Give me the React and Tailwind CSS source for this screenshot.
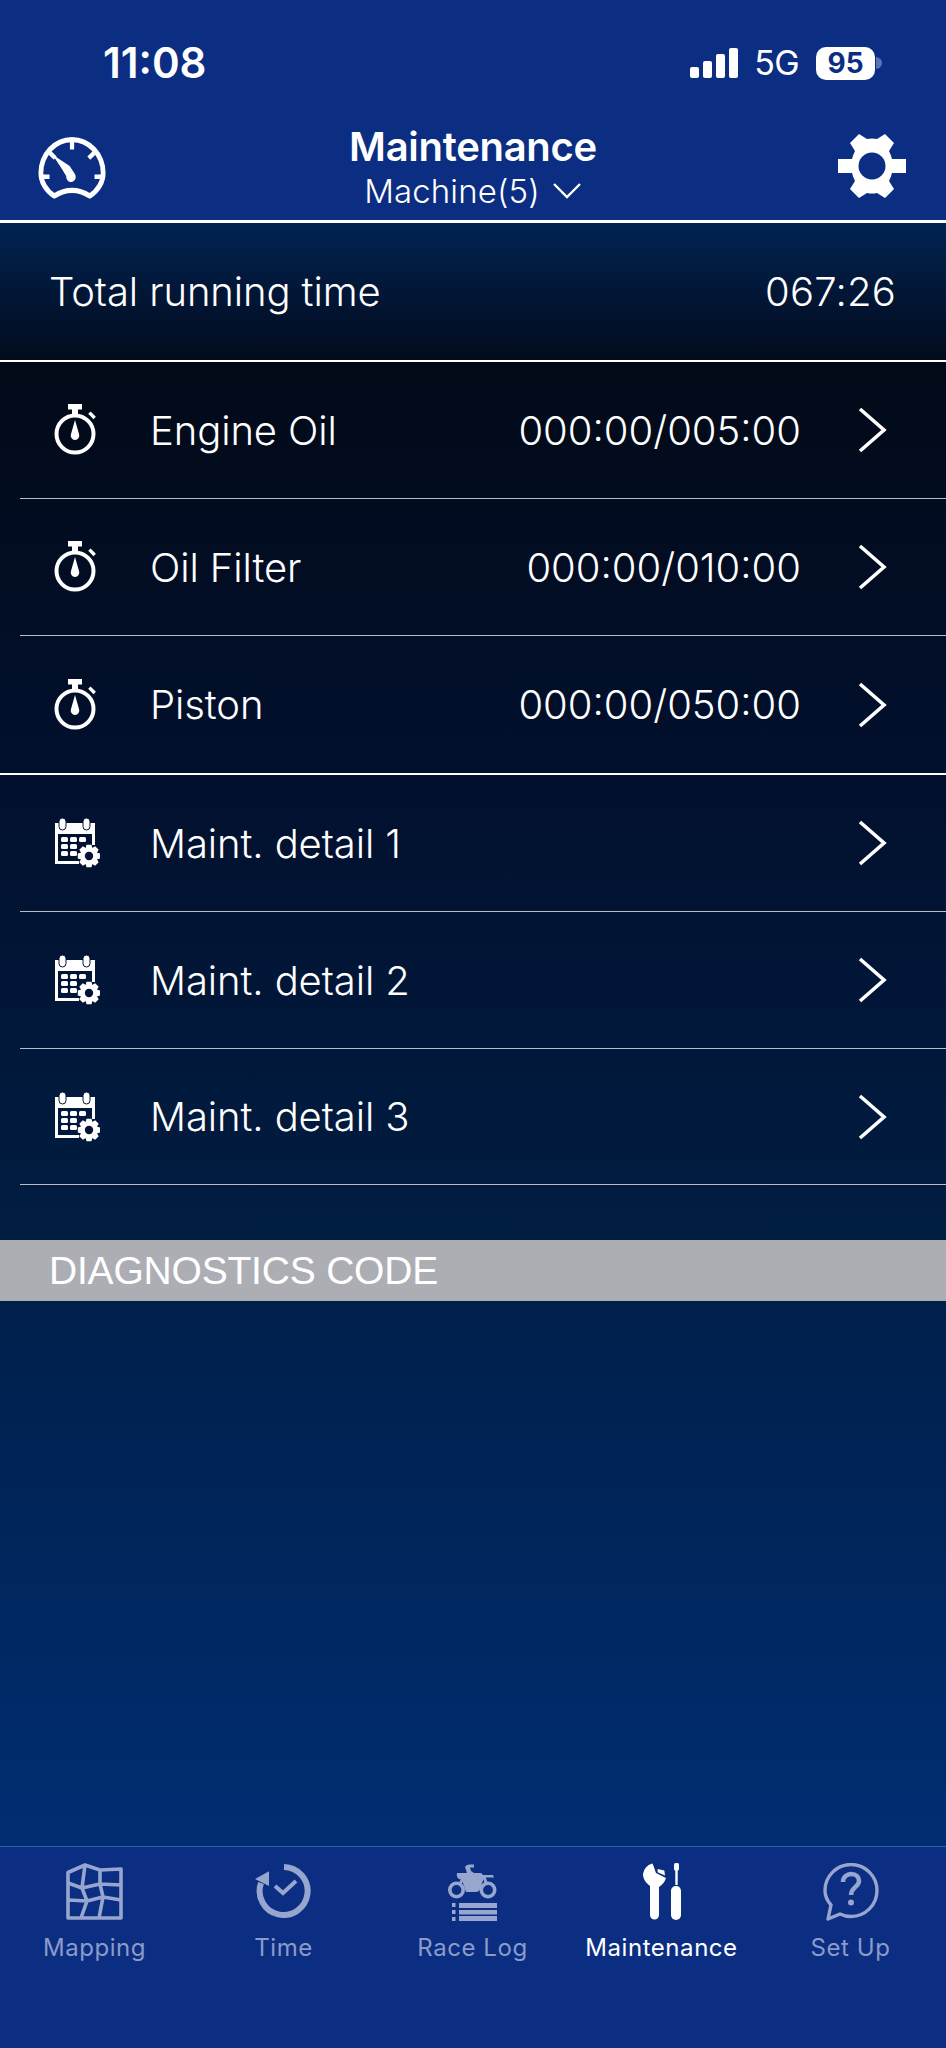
import React from "react";

const Chevron = () => (
  <svg width="30" height="48" viewBox="0 0 30 48" className="shrink-0" fill="none">
    <path d="M2 3 L26 24 L2 45" stroke="#fff" strokeWidth="3.6" />
  </svg>
);

const Timer = () => (
  <svg width="46" height="52" viewBox="0 0 46 52" fill="none" className="shrink-0">
    <rect x="14" y="0" width="14" height="5.5" fill="#fff" />
    <rect x="18" y="5" width="6" height="5" fill="#fff" />
    <rect x="34.5" y="9.5" width="7.5" height="3.4" transform="rotate(45 38 11)" fill="#fff" />
    <circle cx="21" cy="30" r="18.5" stroke="#fff" strokeWidth="4" />
    <path d="M21 16 L25 30 A4.3 4.3 0 1 1 17 30 Z" fill="#fff" />
  </svg>
);

const gearPath = (cx, cy, r, tooth) => {
  let d = "";
  for (let i = 0; i < 8; i++) {
    const a = (i * Math.PI) / 4;
    const w = Math.PI / 10;
    const p = [
      [a - w * 1.3, r],
      [a - w * 0.7, tooth],
      [a + w * 0.7, tooth],
      [a + w * 1.3, r],
    ];
    p.forEach(([t, q], j) => {
      d += `${i === 0 && j === 0 ? "M" : "L"}${(cx + q * Math.cos(t)).toFixed(2)} ${(cy + q * Math.sin(t)).toFixed(2)} `;
    });
  }
  return d + "Z";
};

const CalGear = () => (
  <svg width="46" height="50" viewBox="0 0 46 50" fill="none" className="shrink-0">
    <path d="M1 5 H41 V27 H38 V16 H4 V43 H25 V46 H1 Z" fill="#fff" />
    <rect x="5" y="0" width="7" height="12" rx="3.5" fill="#fff" stroke="#021334" strokeWidth="1" />
    <rect x="29" y="0" width="7" height="12" rx="3.5" fill="#fff" stroke="#021334" strokeWidth="1" />
    {[19, 26, 33].map((y) =>
      [7, 16, 25].map((x) =>
        y === 33 && x === 25 ? null : y === 26 && x === 25 ? null : <rect key={`${x}-${y}`} x={x} y={y} width="7" height="5" rx="1.5" fill="#fff" />
      )
    )}
    <path d={gearPath(35, 38, 8.5, 11.5)} fill="#fff" />
    <circle cx="35" cy="38" r="4.2" fill="#021334" />
  </svg>
);

const Gauge = () => (
  <svg width="69" height="62" viewBox="0 0 72 60" preserveAspectRatio="none" fill="none">
    <path d="M17 57 C8 52 3 43 3 35 A32.5 32.5 0 0 1 68 35 C68 43 63 52 54 57 C42 50 29 50 17 57 Z" stroke="#fff" strokeWidth="5" strokeLinejoin="round" />
    <path d="M35.5 4 V12 M12 15 L18 20.5 M59 15 L53 20.5 M3 38.5 H12 M59 38.5 H68" stroke="#fff" strokeWidth="4.4" />
    <path d="M15 17 L33 28 L38 35 A5 5 0 1 1 29.5 38 L25 31 Z" fill="#fff" />
  </svg>
);

const Gear = () => (
  <svg width="70" height="66" viewBox="0 0 70 66" fill="none">
    <path
      d="M22 1 L30 6 Q35 5 40 6 L48 1 L57 10 L52 18 Q54 22 55 26 H69 V40 H55 Q54 44 52 48 L57 56 L48 65 L40 60 Q35 61 30 60 L22 65 L13 56 L18 48 Q16 44 15 40 H1 V26 H15 Q16 22 18 18 L13 10 Z"
      fill="#fff"
    />
    <circle cx="35" cy="33" r="13.5" fill="#0b2e83" />
  </svg>
);

const TabMap = () => (
  <svg width="58" height="58" viewBox="0 0 58 58" fill="none" stroke="#97a6cf" strokeWidth="3.6" strokeLinejoin="round">
    <path d="M2 9.5 L19 2 L34 7 L55 6 V55 H2 Z" />
    <path d="M19 2 L16 25 L21 38 L15 55 M2 20 L16 25 L34 21 L55 22 M34 7 L34 21 L37 34 L33 55 M2 37 L21 38 L37 34 L55 37" />
  </svg>
);

const TabTime = () => (
  <svg width="58" height="58" viewBox="0 0 58 58" fill="none">
    <path d="M29 4 A24 24 0 1 1 6 20" stroke="#97a6cf" strokeWidth="6" />
    <path d="M0 16 L14 8.3 L14 23 Z" fill="#97a6cf" />
    <path d="M20 23 L28 30 L41 18" stroke="#97a6cf" strokeWidth="4" />
  </svg>
);

const TabRace = () => (
  <svg width="52" height="58" viewBox="0 0 52 58" fill="none">
    <path d="M18 4 Q19 1.5 22 1.5 H27 V4.5 H23 L24 8 L27 10 H34 L36 12 H46 L47 14.5 H37 L33 26 Q32 29 29 29 H19 L15 17 L12 16 Q9 14 10 10 H20 Z" fill="#97a6cf" />
    <circle cx="9.5" cy="27" r="6.7" stroke="#97a6cf" strokeWidth="3.6" />
    <circle cx="41" cy="27" r="6.7" stroke="#97a6cf" strokeWidth="3.6" />
    <path d="M12 22 L18 13 M37 14 L40 22" stroke="#97a6cf" strokeWidth="3" />
    <rect x="5" y="40" width="3.5" height="4" fill="#97a6cf" />
    <rect x="5" y="47" width="3.5" height="4" fill="#97a6cf" />
    <rect x="5" y="54" width="3.5" height="4" fill="#97a6cf" />
    <rect x="12" y="40" width="38" height="5" fill="#97a6cf" />
    <rect x="12" y="47" width="38" height="4.5" fill="#97a6cf" />
    <rect x="12" y="53" width="38" height="5" fill="#97a6cf" />
  </svg>
);

const TabMaint = () => (
  <svg width="38" height="58" viewBox="0 0 38 58" fill="none">
    <path d="M9.6 0.5 A12 12 0 0 0 0 11 C0 16 3 20 7 23 V52 A4.5 4.5 0 0 0 16 52 V24 C19 22 22 19 23 15 L13 10 Z" fill="#fff" />
    <path d="M14.6 6 L21.3 7.6 L22 12.6 L14.6 9.3 Z" fill="#fff" />
    <rect x="31" y="0" width="5" height="7.5" rx="1.5" fill="#fff" />
    <rect x="32.3" y="7" width="2.4" height="15" fill="#fff" />
    <path d="M28 28 C28 25 30 23 33.5 23 C36 23 38 25 38 28 V52 A5 5 0 0 1 28 52 Z" fill="#fff" />
  </svg>
);

const TabHelp = () => (
  <svg width="56" height="58" viewBox="0 0 56 58" fill="none">
    <path d="M8 42 C4 37.5 2 33 2 27.5 A26 26 0 1 1 28 53.5 C24 53.5 20 52.5 17 51 L5 56 Z" stroke="#97a6cf" strokeWidth="3.4" strokeLinejoin="round" />
    <path d="M20 19 C20 14 24 11 28 11 C33 11 36 14 36 18 C36 24 28 24 28 32" stroke="#97a6cf" strokeWidth="4.5" />
    <circle cx="28" cy="39.5" r="3" fill="#97a6cf" />
  </svg>
);

const Row = ({ icon, label, value, className = "" }) => (
  <div className={`ml-5 pr-[58px] flex items-center ${className}`}>
    <div className="w-[82px] shrink-0 pl-[34px] flex items-center">{icon}</div>
    <div className="pl-[48px] pt-[1px] text-[40px] leading-none font-light tracking-[-0.1px] flex-1">{label}</div>
    {value && <div className="pt-[1px] text-[40px] leading-none font-light mr-[57px]">{value}</div>}
    <Chevron />
  </div>
);

const Tab = ({ icon, label, active }) => (
  <div className="w-[189px] flex flex-col items-center">
    <div className="h-[60px] flex items-center justify-center">{icon}</div>
    <div className={`mt-[11px] text-[24px] leading-[30px] tracking-[0.55px] ${active ? "text-white" : "text-[#8a9bc9]"}`}>{label}</div>
  </div>
);

export default function App() {
  return (
    <div className="w-[946px] h-[2048px] flex flex-col text-white overflow-hidden font-['Inter',sans-serif] bg-[#002a69]">
      <header className="h-[220px] bg-[#0b2e83] shrink-0">
        <div className="flex items-start h-[122px]">
          <div className="ml-[103px] mt-[40px] text-[42px] leading-[46px] font-semibold">11:08</div>
          <div className="ml-auto mr-[64px] mt-[46px] flex items-center h-[34px]">
            <div className="flex items-end gap-[4px] h-[30px]">
              <div className="w-[9px] h-[11px] rounded-[2px] bg-white" />
              <div className="w-[9px] h-[17px] rounded-[2px] bg-white" />
              <div className="w-[9px] h-[24px] rounded-[2px] bg-white" />
              <div className="w-[9px] h-[30px] rounded-[2px] bg-white" />
            </div>
            <div className="ml-[16px] text-[34px] leading-none font-normal tracking-[-0.6px]">5G</div>
            <div className="ml-[17px] w-[59px] h-[33px] rounded-[10px] bg-white text-[#0b2e83] text-[28px] leading-[33px] font-bold text-center">95</div>
            <div className="ml-[1px] w-[6px] h-[12px] rounded-r-full bg-[#5a73b5]" />
          </div>
        </div>
        <div className="flex items-start">
          <div className="ml-[38px] mt-[15px] w-[71px]"><Gauge /></div>
          <div className="flex-1 flex flex-col items-center pt-[3px]">
            <div className="text-[40px] leading-[44px] font-semibold tracking-[-0.3px]">Maintenance</div>
            <div className="mt-[3px] flex items-center text-[33px] leading-[38px] font-light tracking-[0.1px]">
              Machine(5)
              <svg width="30" height="18" viewBox="0 0 30 18" fill="none" className="ml-[12px]">
                <path d="M2 2 L15 15 L28 2" stroke="#fff" strokeWidth="2.4" />
              </svg>
            </div>
          </div>
          <div className="mr-[39px] mt-[11px] w-[70px]"><Gear /></div>
        </div>
      </header>
      <div className="h-[3px] bg-white shrink-0" />

      <section className="h-[137px] shrink-0 flex items-center justify-between pl-[49px] pr-[50px] bg-gradient-to-b from-[#002352] to-[#020b1e]">
        <div className="text-[40px] leading-none font-light tracking-[-0.1px]">Total running time</div>
        <div className="text-[40px] leading-none font-light tracking-[0.2px]">067:26</div>
      </section>
      <div className="h-[2px] bg-white shrink-0" />

      <div className="shrink-0 bg-gradient-to-b from-[#020a18] to-[#02102e]">
        <Row icon={<Timer />} label="Engine Oil" value="000:00/005:00" className="h-[137px] border-b border-[#b9bcc4]" />
        <Row icon={<Timer />} label="Oil Filter" value="000:00/010:00" className="h-[137px] border-b border-[#b9bcc4]" />
        <Row icon={<Timer />} label="Piston" value="000:00/050:00" className="h-[137px]" />
      </div>
      <div className="h-[2px] bg-white shrink-0" />
      <div className="shrink-0 bg-gradient-to-b from-[#02102e] to-[#001d42] pb-[55px]">
        <Row icon={<CalGear />} label="Maint. detail 1" className="h-[137px] border-b border-[#b9bcc4]" />
        <Row icon={<CalGear />} label="Maint. detail 2" className="h-[137px] border-b border-[#b9bcc4]" />
        <Row icon={<CalGear />} label="Maint. detail 3" className="h-[136px] border-b border-[#b9bcc4]" />
      </div>

      <div className="h-[61px] shrink-0 bg-[#adaeb3] pl-[49px] flex items-center text-[39px] leading-none font-['Liberation_Sans',sans-serif] tracking-[-0.2px]">
        DIAGNOSTICS CODE
      </div>

      <div className="flex-1 bg-gradient-to-b from-[#001f4b] to-[#002e72]" />

      <nav className="h-[202px] shrink-0 bg-[#0b2e83] border-t border-[#3a5a9e] pt-[15px] flex">
        <Tab icon={<TabMap />} label="Mapping" />
        <Tab icon={<TabTime />} label="Time" />
        <Tab icon={<TabRace />} label="Race Log" />
        <Tab icon={<TabMaint />} label="Maintenance" active />
        <Tab icon={<TabHelp />} label="Set Up" />
      </nav>
    </div>
  );
}
